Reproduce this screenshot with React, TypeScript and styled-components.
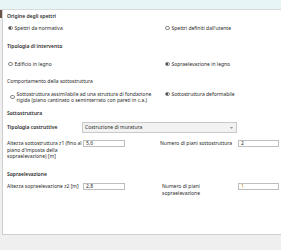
import React from "react";
import styled, { createGlobalStyle } from "styled-components";

const Global = createGlobalStyle`
  html, body { margin: 0; padding: 0; background: #efefef; }
  body {
    font-family: "Noto Sans", "Open Sans", sans-serif;
    font-size: 5px;
    line-height: 6.5px;
    color: #2b2b2b;
    -webkit-font-smoothing: antialiased;
  }
`;

const TopBar = styled.div`
  height: 9px;
  background: #e8f5f7;
  border-bottom: 1px solid #d6dadb;
`;

const Frame = styled.div`
  display: flex;
  align-items: flex-start;
`;

const Marker = styled.div`
  width: 2px;
  height: 8px;
  background: #6e5446;
  flex: none;
`;

const Panel = styled.div`
  flex: 1;
  height: 225px;
  box-sizing: border-box;
  background: #fff;
  border: 1px solid #cfcfcf;
  border-top: none;
  border-right: none;
  padding: 3px 0 0 4px;
`;

const Heading = styled.div<{ $mt?: number; $bold?: boolean }>`
  margin-top: ${(p) => p.$mt ?? 0}px;
  font-weight: ${(p) => (p.$bold === false ? 400 : 600)};
  white-space: nowrap;
`;

const TwoCol = styled.div<{ $mt: number }>`
  display: grid;
  grid-template-columns: 157px 1fr;
  margin-top: ${(p) => p.$mt}px;
  align-items: start;
`;

const Option = styled.label<{ $shift?: number }>`
  display: flex;
  align-items: center;
  gap: 2px;
  padding-left: ${(p) => p.$shift ?? 1}px;
  white-space: nowrap;
`;

const Radio = styled.span<{ $on?: boolean }>`
  width: 4.5px;
  height: 4.5px;
  box-sizing: border-box;
  border-radius: 50%;
  border: 0.6px solid #8a8a8a;
  background: #fff;
  display: inline-flex;
  align-items: center;
  justify-content: center;
  flex: none;
  &::after {
    content: "";
    width: 2.2px;
    height: 2.2px;
    border-radius: 50%;
    background: ${(p) => (p.$on ? "#262626" : "transparent")};
  }
`;

const MultiText = styled.span`
  white-space: normal;
  line-height: 6.5px;
`;

const SelectRow = styled.div`
  display: grid;
  grid-template-columns: 75px 155px;
  align-items: center;
  margin-top: 6px;
`;

const Select = styled.div`
  height: 11px;
  box-sizing: border-box;
  border: 1px solid #c9c9c9;
  background: #f2f2f2;
  display: flex;
  align-items: center;
  justify-content: space-between;
  padding: 0 3px 0 2px;
`;

const Chevron = styled.svg`
  width: 3px;
  height: 2px;
`;

const FieldRow = styled.div<{ $mt: number }>`
  display: grid;
  grid-template-columns: 76px 42px 35px 78px 41px;
  align-items: start;
  margin-top: ${(p) => p.$mt}px;
`;

const FieldLabel = styled.div<{ $pl?: number }>`
  padding-left: ${(p) => p.$pl ?? 0}px;
  line-height: 6.5px;
`;

const Input = styled.div<{ $accent?: boolean }>`
  height: 7px;
  box-sizing: border-box;
  border: 1px solid #bdbdbd;
  background: #fff;
  padding-left: 2px;
  line-height: 5px;
  color: ${(p) => (p.$accent ? "#c47d00" : "#2b2b2b")};
`;

export default function App() {
  return (
    <>
      <Global />
      <TopBar />
      <Frame>
        <Marker />
        <Panel>
          <Heading>Origine degli spettri</Heading>
          <TwoCol $mt={5}>
            <Option>
              <Radio $on />
              Spettri da normativa
            </Option>
            <Option>
              <Radio />
              Spettri definiti dall'utente
            </Option>
          </TwoCol>

          <Heading $mt={12}>Tipologia di intervento</Heading>
          <TwoCol $mt={11}>
            <Option>
              <Radio />
              Edificio in legno
            </Option>
            <Option>
              <Radio $on />
              Sopraelevazione in legno
            </Option>
          </TwoCol>

          <Heading $mt={11} $bold={false}>
            Comportamento della sottostruttura
          </Heading>
          <TwoCol $mt={6}>
            <Option $shift={3}>
              <Radio />
              <MultiText>
                Sottostruttura assimilabile ad una struttura di fondazione
                <br />
                rigida (piano cantinato o seminterrato con pareti in c.a.)
              </MultiText>
            </Option>
            <Option>
              <Radio $on />
              Sottostruttura deformabile
            </Option>
          </TwoCol>

          <Heading $mt={6}>Sottostruttura</Heading>
          <SelectRow>
            <Heading>Tipologia costruttive</Heading>
            <Select>
              <span>Costruzione di muratura</span>
              <Chevron viewBox="0 0 4 2">
                <path d="M0 0 L2 2 L4 0 Z" fill="#777" />
              </Chevron>
            </Select>
          </SelectRow>

          <FieldRow $mt={7}>
            <FieldLabel>
              Altezza sottostruttura z1 (fino al piano d'imposta della
              sopraelevazione) [m]
            </FieldLabel>
            <Input>5,6</Input>
            <span />
            <FieldLabel>Numero di piani sottostruttura</FieldLabel>
            <Input>2</Input>
          </FieldRow>

          <Heading $mt={11}>Sopraelevazione</Heading>
          <FieldRow $mt={6}>
            <FieldLabel>Altezza sopraelevazione z2 [m]</FieldLabel>
            <Input>2,8</Input>
            <span />
            <FieldLabel $pl={2}>
              Numero di piani
              <br />
              sopraelevazione
            </FieldLabel>
            <Input $accent>1</Input>
          </FieldRow>
        </Panel>
      </Frame>
    </>
  );
}
